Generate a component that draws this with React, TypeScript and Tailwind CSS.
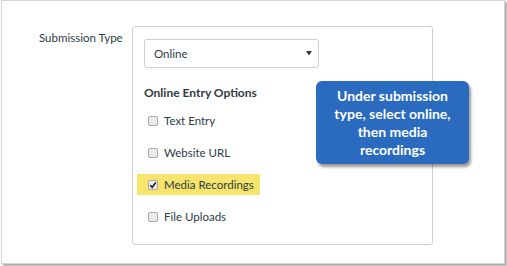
import React from "react";

function Box({ checked }: { checked?: boolean }) {
  return (
    <span className="relative flex h-[10px] w-[10px] shrink-0 items-center justify-center rounded-[2px] border border-[#a8a8a8] bg-[#ececec]">
      {checked && (
        <svg width="8" height="8" viewBox="0 0 8 8" className="absolute">
          <path d="M1.2 4.2 L3.2 6.2 L6.8 1.6" fill="none" stroke="#1b1b1b" strokeWidth="1.6" />
        </svg>
      )}
    </span>
  );
}

function Row({ label, checked }: { label: string; checked?: boolean }) {
  return (
    <div
      className={
        "-ml-[7px] flex h-[21px] w-[123px] items-center gap-[6px] pl-[11px] " +
        (checked ? "bg-[#f6e46c]" : "")
      }
    >
      <Box checked={checked} />
      <span className="whitespace-nowrap text-[11.5px] leading-[16px] text-[#2d3b45]">{label}</span>
    </div>
  );
}

export default function App() {
  return (
    <div className="h-[266px] w-[507px] bg-white" style={{ fontFamily: "Lato, 'Open Sans', sans-serif" }}>
      <div className="relative ml-[1px] h-[264px] w-[504px] border border-[#d4d4d4] bg-white shadow-[2px_2px_2px_rgba(0,0,0,0.35)]">
        <div className="flex items-start pt-[25px]">
          <div className="mt-[4px] w-[130px] whitespace-nowrap pl-[37px] text-[11.5px] leading-[16px] text-[#2d3b45]">Submission Type</div>
          <div className="h-[219px] w-[301px] rounded-[3px] border border-[#cfcfcf] px-[11px] pt-[12px]">
            <div className="flex h-[29px] w-[175px] items-center justify-between rounded-[3px] border border-[#d0d0d0] pl-[9px] pr-[6px]">
              <span className="text-[11.5px] leading-[16px] text-[#2d3b45]">Online</span>
              <svg width="6" height="5" viewBox="0 0 6 5">
                <path d="M0 0 H6 L3 4.5 Z" fill="#2d3b45" />
              </svg>
            </div>
            <div className="mt-[17px] text-[12px] font-bold leading-[16px] text-[#2d3b45]">Online Entry Options</div>
            <div className="mt-[9px] flex flex-col gap-[11px]">
              <Row label="Text Entry" />
              <Row label="Website URL" />
              <Row label="Media Recordings" checked />
              <Row label="File Uploads" />
            </div>
          </div>
        </div>
        <div
          className="absolute left-[314px] top-[80px] flex h-[83px] w-[153px] flex-col items-center rounded-[6px] bg-[#2a6bbf] pt-[6px] text-center text-[14px] font-bold leading-[18px] text-white shadow-[2px_3px_3px_rgba(0,0,0,0.4)]"
          style={{ fontFamily: "Lato, 'Open Sans', sans-serif" }}
        >
          <span>Under submission</span>
          <span>type, select online,</span>
          <span>then media</span>
          <span>recordings</span>
        </div>
      </div>
    </div>
  );
}
